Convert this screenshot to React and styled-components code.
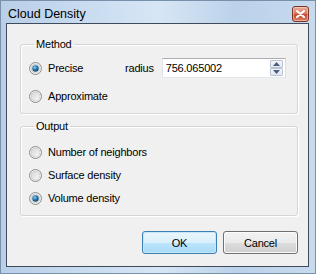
import React from "react";
import styled, { createGlobalStyle } from "styled-components";

const Global = createGlobalStyle`
  html, body { margin: 0; padding: 0; background: #ffffff; }
  * { box-sizing: border-box; }
`;

const Window = styled.div`
  width: 316px;
  height: 274px;
  border: 1px solid #7890aa;
  background: linear-gradient(90deg, #b9cfe8 0%, #cddff2 35%, #d7e6f5 50%, #bcd2ea 75%, #c7daee 100%);
  display: flex;
  flex-direction: column;
  padding: 0 6px 6px 5px;
  font-family: "Liberation Sans", Arial, sans-serif;
`;

const TitleBar = styled.div`
  height: 22px;
  display: flex;
  align-items: center;
  justify-content: space-between;
  padding: 0 0 0 2px;
`;

const Title = styled.span`
  font-family: "Liberation Sans", Arial, sans-serif;
  font-size: 12.5px;
  color: #000;
  margin-top: 4px;
`;

const CloseButton = styled.div`
  width: 17px;
  height: 16px;
  margin-top: 4px;
  border: 1px solid #7d3426;
  border-radius: 3px;
  background: linear-gradient(180deg, #eab0a0 0%, #d9795f 45%, #c44a2e 55%, #d8836a 100%);
  display: flex;
  align-items: center;
  justify-content: center;
  box-shadow: inset 0 0 0 1px rgba(255, 220, 210, 0.5);
`;

const Client = styled.div`
  flex: 1;
  border: 1px solid #3f4b5a;
  background: #f0f0f0;
  display: flex;
  flex-direction: column;
  padding: 14px 10px 11px 13px;
  font-size: 11px;
  letter-spacing: -0.2px;
  color: #000;
`;

const Group = styled.fieldset`
  margin: 0;
  padding: ${(p) => p.$pad};
  border: 1px solid #d5d5d5;
  border-radius: 3px;
  box-shadow: inset 1px 1px 0 #ffffff, 1px 1px 0 #ffffff;
  display: flex;
  flex-direction: column;
  gap: ${(p) => p.$gap}px;
  min-width: 0;
  & + & {
    margin-top: 6px;
  }
`;

const Legend = styled.legend`
  margin-left: 5px;
  padding: 0 2px;
  line-height: 13px;
  font-size: 11px;
`;

const Row = styled.div`
  height: ${(p) => p.$h}px;
  display: flex;
  align-items: center;
`;

const RadioLabel = styled.label`
  display: flex;
  align-items: center;
  gap: 6px;
  width: ${(p) => (p.$w ? `${p.$w}px` : "auto")};
`;

const FieldLabel = styled.span`
  margin-right: 8px;
`;

const SpinBox = styled.div`
  width: 124px;
  height: 20px;
  background: #fff;
  border: 1px solid #abadb3;
  border-left-color: #e2e3ea;
  border-right-color: #dbdfe6;
  border-bottom-color: #e3e9ef;
  display: flex;
  align-items: center;
  padding: 0 2px 0 3px;
`;

const SpinText = styled.span`
  flex: 1;
`;

const SpinButtons = styled.div`
  display: flex;
  flex-direction: column;
`;

const SpinBtn = styled.div`
  width: 13px;
  height: 8px;
  border: 1px solid #b9c3d2;
  background: linear-gradient(180deg, #f4f6f9 0%, #e4e8ef 100%);
  display: flex;
  align-items: center;
  justify-content: center;
  border-radius: 1px;
`;

const ButtonRow = styled.div`
  margin-top: 15px;
  display: flex;
  justify-content: flex-end;
  gap: 6px;
`;

const Button = styled.div`
  width: 75px;
  height: 23px;
  border-radius: 3px;
  display: flex;
  align-items: center;
  justify-content: center;
  font-size: 11px;
  border: 1px solid ${(p) => (p.$default ? "#3c7fb1" : "#707070")};
  background: ${(p) =>
    p.$default
      ? "linear-gradient(180deg, #eaf6fd 0%, #d9f0fc 50%, #bee6fd 51%, #a7d9f5 100%)"
      : "linear-gradient(180deg, #f2f2f2 0%, #ebebeb 50%, #dddddd 51%, #cfcfcf 100%)"};
  box-shadow: inset 0 0 0 1px ${(p) => (p.$default ? "#c6e7f9" : "#fbfbfb")};
`;

function Radio({ checked }) {
  return (
    <svg width="13" height="13" viewBox="0 0 13 13">
      <defs>
        <linearGradient id="rbg" x1="0" y1="0" x2="1" y2="1">
          <stop offset="0" stopColor="#d4d4d4" />
          <stop offset="1" stopColor="#fbfbfb" />
        </linearGradient>
        <radialGradient id="rdot" cx="0.4" cy="0.35" r="0.7">
          <stop offset="0" stopColor="#8fd6f7" />
          <stop offset="0.45" stopColor="#2a7fb8" />
          <stop offset="1" stopColor="#103a5c" />
        </radialGradient>
      </defs>
      <circle cx="6.5" cy="6.5" r="6" fill="#f4f4f4" stroke="#8d8d8d" strokeWidth="1" />
      <circle cx="6.5" cy="6.5" r="4.5" fill="url(#rbg)" stroke="#c8c8c8" strokeWidth="0.8" />
      {checked && <circle cx="6.5" cy="6.5" r="3.2" fill="url(#rdot)" />}
    </svg>
  );
}

function Arrow({ up }) {
  return (
    <svg width="7" height="4" viewBox="0 0 7 4">
      <polygon points={up ? "3.5,0 7,4 0,4" : "0,0 7,0 3.5,4"} fill="#4a5f80" />
    </svg>
  );
}

export default function App() {
  return (
    <>
      <Global />
      <Window>
        <TitleBar>
          <Title>Cloud Density</Title>
          <CloseButton>
            <svg width="9" height="8" viewBox="0 0 9 8">
              <path d="M1 1 L8 7 M8 1 L1 7" stroke="#fff" strokeWidth="2" strokeLinecap="round" />
            </svg>
          </CloseButton>
        </TitleBar>
        <Client>
          <Group $pad="7px 11px 7px 8px" $gap={8}>
            <Legend>Method</Legend>
            <Row $h={20}>
              <RadioLabel $w={96}>
                <Radio checked />
                Precise
              </RadioLabel>
              <FieldLabel>radius</FieldLabel>
              <SpinBox>
                <SpinText>756.065002</SpinText>
                <SpinButtons>
                  <SpinBtn><Arrow up /></SpinBtn>
                  <SpinBtn><Arrow /></SpinBtn>
                </SpinButtons>
              </SpinBox>
            </Row>
            <Row $h={20}>
              <RadioLabel>
                <Radio />
                Approximate
              </RadioLabel>
            </Row>
          </Group>
          <Group $pad="10px 11px 8px 8px" $gap={5}>
            <Legend>Output</Legend>
            <Row $h={18}>
              <RadioLabel>
                <Radio />
                Number of neighbors
              </RadioLabel>
            </Row>
            <Row $h={18}>
              <RadioLabel>
                <Radio />
                Surface density
              </RadioLabel>
            </Row>
            <Row $h={18}>
              <RadioLabel>
                <Radio checked />
                Volume density
              </RadioLabel>
            </Row>
          </Group>
          <ButtonRow>
            <Button $default>OK</Button>
            <Button>Cancel</Button>
          </ButtonRow>
        </Client>
      </Window>
    </>
  );
}
